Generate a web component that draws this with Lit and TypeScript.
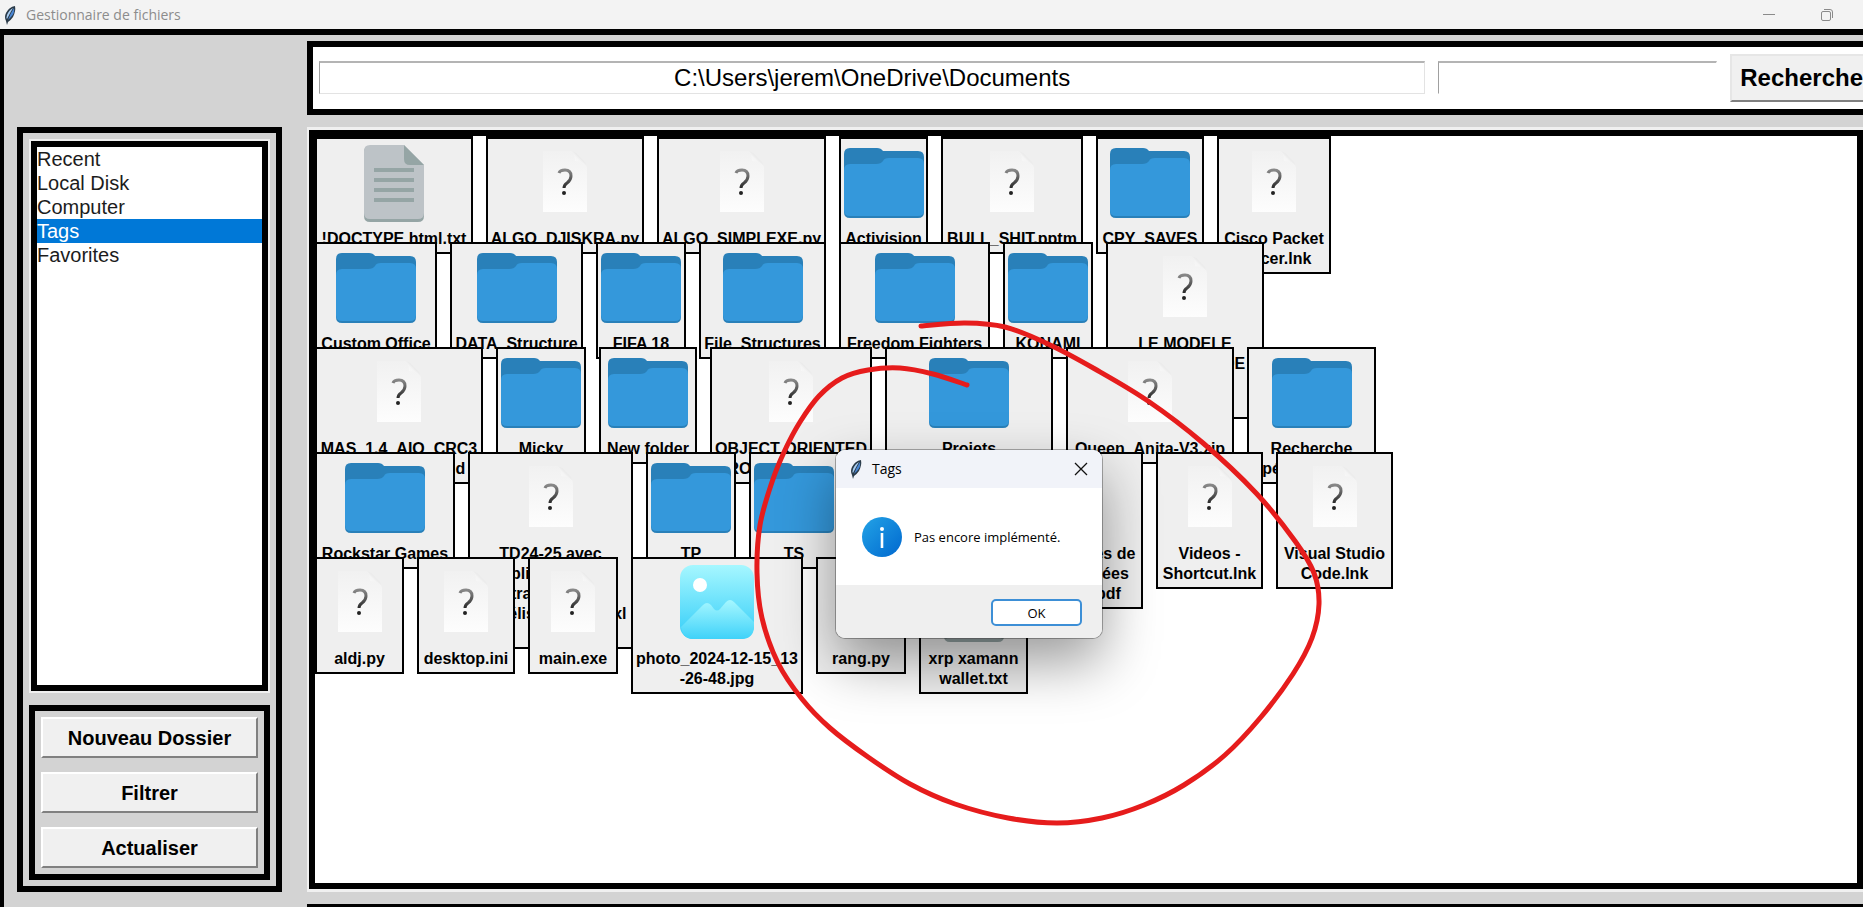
import { LitElement, html, css, svg } from "lit";
import { customElement, property, state } from "lit/decorators.js";
import { classMap } from "lit/directives/class-map.js";
import { styleMap } from "lit/directives/style-map.js";

type Kind = "folder" | "text" | "unknown" | "image";

interface Item {
  name: string;
  kind: Kind;
  width: number;
}

const item = (name: string, kind: Kind, width: number): Item => ({ name, kind, width });

// Each string holds the label already wrapped at the tile's wrap length.
const ROWS: Item[][] = [
  [
    item("!DOCTYPE html.txt", "text", 158),
    item("ALGO_DJISKRA.py", "unknown", 158),
    item("ALGO_SIMPLEXE.py", "unknown", 169),
    item("Activision", "folder", 89),
    item("BULL_SHIT.pptm", "unknown", 142),
    item("CPY_SAVES", "folder", 108),
    item("Cisco Packet\nTracer.lnk", "unknown", 114),
  ],
  [
    item("Custom Office\nTemplates", "folder", 122),
    item("DATA_Structure", "folder", 133),
    item("FIFA 18", "folder", 90),
    item("File_Structures", "folder", 127),
    item("Freedom Fighters", "folder", 151),
    item("KONAMI", "folder", 90),
    item("LE MODELE\nOPERATION DE\nDONNEES\n.pdf", "unknown", 158),
  ],
  [
    item("MAS_1.4_AIO_CRC3\n2_31F7FD1E.cmd", "unknown", 168),
    item("Micky", "folder", 90),
    item("New folder", "folder", 98),
    item("OBJECT ORIENTED\nPROGRAMMING.py", "unknown", 162),
    item("Projets", "folder", 168),
    item("Queen_Anita-V3.zip", "unknown", 168),
    item("Recherche\nopérationnelles", "folder", 129),
  ],
  [
    item("Rockstar Games", "folder", 140),
    item("TD24-25 avec\napplication des\ntransports\nmodélisation_v24.xl\nsx", "unknown", 165),
    item("TP", "folder", 90),
    item("TS", "folder", 90),
    item("TP bases", "folder", 134),
    item("Types dérivés de\nbases données\n_complet.pdf", "unknown", 144),
    item("Videos -\nShortcut.lnk", "unknown", 107),
    item("Visual Studio\nCode.lnk", "unknown", 117),
  ],
  [
    item("aldj.py", "unknown", 89),
    item("desktop.ini", "unknown", 98),
    item("main.exe", "unknown", 90),
    item("photo_2024-12-15_13\n-26-48.jpg", "image", 172),
    item("rang.py", "unknown", 90),
    item("xrp xamann\nwallet.txt", "text", 109),
  ],
];

const PLACES = ["Recent", "Local Disk", "Computer", "Tags", "Favorites"];
const ACTIONS = ["Nouveau Dossier", "Filtrer", "Actualiser"];

// Freehand stroke, as sampled points.
const STROKE: [number, number][] = [
  [921, 326], [965, 323], [1005, 327], [1048, 344], [1095, 369], [1148, 401], [1203, 443],
  [1256, 493], [1295, 541], [1314, 573], [1319, 604], [1312, 638], [1293, 674], [1261, 717],
  [1225, 755], [1184, 785], [1144, 805], [1102, 818], [1057, 823], [1008, 818], [955, 804], [910, 784],
  [868, 757], [830, 728], [802, 699], [778, 663], [762, 618], [757, 573], [760, 525], [772, 482],
  [785, 450], [800, 422], [819, 396], [842, 378], [868, 370], [900, 368], [933, 374], [967, 385],
];

// Catmull-Rom spline through the points, written as cubic Béziers.
function smooth(p: [number, number][]): string {
  let d = `M${p[0][0]} ${p[0][1]}`;
  for (let i = 0; i < p.length - 1; i++) {
    const a = p[Math.max(i - 1, 0)], b = p[i], c = p[i + 1], e = p[Math.min(i + 2, p.length - 1)];
    d += `C${b[0] + (c[0] - a[0]) / 6} ${b[1] + (c[1] - a[1]) / 6} ${c[0] - (e[0] - b[0]) / 6} ${c[1] - (e[1] - b[1]) / 6} ${c[0]} ${c[1]}`;
  }
  return d;
}

const GLYPHS: Record<Kind, unknown> = {
  folder: svg`
    <path d="M0 69V11Q0 5 6 5H33Q37 5 39 8H74Q80 8 80 14V69Q80 75 74 75H6Q0 75 0 69Z" fill="#2980b9"/>
    <path d="M0 69V27Q0 21 6 21H32Q37 21 39 18Q40 15 45 15H74Q80 15 80 21V67Q80 73 74 73H6Q0 73 0 67Z" fill="#3498db"/>`,
  text: svg`
    <path d="M10 9Q10 3 16 3H50L70 23V73Q70 79 64 79H16Q10 79 10 73Z" fill="#95a5a5"/>
    <path d="M10 8Q10 2 16 2H50L70 22V70Q70 76 64 76H16Q10 76 10 70Z" fill="#bdc3c7"/>
    <path d="M50 2L70 22H56Q50 22 50 16Z" fill="#95a5a5"/>
    <path d="M20 27H60M20 37H60M20 47H60M20 57H60" stroke="#95a5a5" stroke-width="4"/>`,
  unknown: svg`
    <defs>
      <linearGradient id="sheet" x1="0" y1="0" x2="0" y2="1">
        <stop offset="0" stop-color="#f1f1f1"/><stop offset="1" stop-color="#fdfdfd"/>
      </linearGradient>
      <linearGradient id="curl" x1="0" y1="1" x2="1" y2="0">
        <stop offset="0" stop-color="#fff"/><stop offset="0.5" stop-color="#f4f4f4"/><stop offset="1" stop-color="#c4c4c4"/>
      </linearGradient>
      <linearGradient id="mark" x1="0" y1="0" x2="0" y2="1">
        <stop offset="0" stop-color="#888"/><stop offset="1" stop-color="#2a2a2a"/>
      </linearGradient>
    </defs>
    <path d="M18 8H45Q50 8 53 12L59 18Q62 21 62 25V69H18Z" fill="url(#sheet)"/>
    <path d="M45 8Q50 9 50 18Q60 18 62 25Q62 21 59 18L53 12Q50 8 45 8Z" fill="url(#curl)"/>
    <path d="M34 30Q35 27 40 27Q46 27 46 33Q46 37 42 40Q39 42 39 45" fill="none" stroke="url(#mark)" stroke-width="3"/>
    <circle cx="39" cy="50" r="2" fill="#222"/>`,
  image: svg`
    <defs>
      <linearGradient id="sky" x1="0" y1="0" x2="0" y2="1">
        <stop offset="0" stop-color="#a6f7ff"/><stop offset="1" stop-color="#33cdf8"/>
      </linearGradient>
      <linearGradient id="hill" x1="0" y1="0" x2="0" y2="1">
        <stop offset="0" stop-color="#a6f7ff"/><stop offset="1" stop-color="#3fd2f9"/>
      </linearGradient>
    </defs>
    <rect x="3" y="2" width="74" height="74" rx="13" fill="url(#sky)"/>
    <path d="M4 64L26 42Q30 38 34 42L37 46Q40 49 43 46L49 39Q53 35 57 39L77 59V63Q77 76 64 76H16Q6 76 4 64Z" fill="url(#hill)"/>
    <circle cx="23" cy="22" r="7" fill="#fff"/>`,
};

const feather = html`<svg width="12" height="20" viewBox="0 0 12 20" aria-hidden="true">
  <path d="M11 1Q12 6 9 12Q7 15 4 17L3 20L2 16Q0 12 2 8Q5 2 11 1Z" fill="#2a3a48"/>
  <path d="M9 3Q5 5 3 10Q2 13 3 14Q6 8 9 3Z" fill="#a9cdf2"/>
  <path d="M10 3Q11 8 7 12L4 15Q6 9 10 3Z" fill="#4a86d4"/>
</svg>`;

@customElement("file-tile")
class FileTile extends LitElement {
  @property() label = "";
  @property() kind: Kind = "unknown";

  static styles = css`
    :host { display: block; flex: none; }
    .tile {
      display: flex; flex-direction: column; align-items: center; gap: 6px;
      box-sizing: border-box; width: 100%; margin: 0; padding: 4px 0 3px;
      border: 2px solid #000; border-radius: 0; background: #efefef; color: #000;
      font: bold 16px/20px "Liberation Sans", Arial, sans-serif;
    }
    .glyph { display: block; }
    .label { white-space: pre; text-align: center; }
  `;

  render() {
    return html`<button class="tile" type="button">
      <svg class="glyph" width="80" height="80" viewBox="0 0 80 80" aria-hidden="true">${GLYPHS[this.kind]}</svg>
      <span class="label">${this.label}</span>
    </button>`;
  }
}

@customElement("message-box")
class MessageBox extends LitElement {
  static styles = css`
    :host {
      display: flex; flex-direction: column; width: 266px; height: 188px; overflow: hidden;
      border-radius: 9px; background: #fff; color: #000;
      font-family: "Open Sans", "Noto Sans", sans-serif;
      box-shadow: 0 0 0 1px rgba(0, 0, 0, 0.3), 0 24px 56px rgba(0, 0, 0, 0.4);
    }
    .caption {
      display: flex; align-items: center; gap: 10px; height: 38px; padding: 0 14px;
      box-sizing: border-box; background: #f1f3f9; font-size: 14px; line-height: 20px;
    }
    .title { flex: 1; }
    .close { display: flex; margin: 0; padding: 0; border: 0; background: none; }
    .body { flex: 1; display: flex; align-items: center; gap: 12px; padding: 0 26px; font-size: 13px; }
    .footer { display: flex; justify-content: flex-end; padding: 14px 20px 12px; background: #efefef; }
    .ok {
      width: 91px; height: 27px; padding: 0; border: 2px solid #3d8fd6; border-radius: 5px;
      background: #fff; color: #000; font: 13px/20px "Open Sans", "Noto Sans", sans-serif;
    }
  `;

  render() {
    return html`
      <header class="caption">
        ${feather}
        <span class="title">Tags</span>
        <button class="close" type="button" aria-label="Fermer">
          <svg width="14" height="14" viewBox="0 0 14 14"><path d="M1 1L13 13M13 1L1 13" stroke="#111" stroke-width="1.3"/></svg>
        </button>
      </header>
      <div class="body">
        <svg width="40" height="40" viewBox="0 0 40 40" aria-hidden="true">
          <defs><linearGradient id="info" x1="0" y1="0" x2="1" y2="1">
            <stop offset="0" stop-color="#23a3e6"/><stop offset="1" stop-color="#0068cf"/>
          </linearGradient></defs>
          <circle cx="20" cy="20" r="20" fill="url(#info)"/>
          <circle cx="20" cy="12" r="2" fill="#fff"/>
          <path d="M20 16V31" stroke="#fff" stroke-width="2.6"/>
        </svg>
        <span>Pas encore implémenté.</span>
      </div>
      <footer class="footer"><button class="ok" type="button">OK</button></footer>
    `;
  }
}

@customElement("app-root")
class AppRoot extends LitElement {
  @state() private place = "Tags";

  static styles = css`
    :host {
      display: flex; flex-direction: column; position: relative; height: 100vh; overflow: hidden;
      background: #d3d3d3; color: #000; font-family: "Liberation Sans", Arial, sans-serif;
    }
    .titlebar {
      flex: none; display: flex; align-items: center; gap: 10px; height: 29px; padding: 0 30px 0 4px;
      box-sizing: border-box; background: #f3f3f3; color: #8c8c8c;
      font: 14px/20px "Open Sans", "Noto Sans", sans-serif;
    }
    .caption { flex: 1; }
    .window-btn { display: flex; margin-left: 36px; padding: 0; border: 0; background: none; }
    .frame {
      flex: 1; min-height: 0; display: grid; grid-template: 74px minmax(0, 1fr) 3px / 265px minmax(0, 1fr);
      gap: 12px 25px; padding: 6px 0 0 13px; border: solid #000; border-width: 6px 0 0 4px;
    }
    .toolbar {
      grid-area: 1 / 2; display: flex; align-items: center; gap: 13px; margin-right: -10px;
      padding: 0 0 1px 6px; border: solid #000; border-width: 6px 0 6px 6px; background: #fff;
    }
    .entry {
      box-sizing: border-box; height: 33px; margin: 0; padding: 0 4px; border: 1px solid #e3e3e3;
      border-top: 2px solid #b4b4b4; border-left-color: #a0a0a0; border-radius: 0; background: #fff;
      color: #000; font: 24px/28px "Liberation Sans", Arial, sans-serif;
    }
    .path { flex: 1; min-width: 0; text-align: center; }
    .query { width: 279px; border-right-color: #fff; border-bottom-color: #fff; }
    .raised {
      display: block; box-sizing: border-box; margin: 0; padding: 0 8px; border: 2px solid #808080;
      border-top-color: #fff; border-left-color: #fff; border-radius: 0; background: #f0f0f0; color: #000;
      font: bold 20px/24px "Liberation Sans", Arial, sans-serif;
    }
    .search { height: 48px; font-size: 24px; border-top-color: #e6e6e6; border-left-color: #e6e6e6; }
    .sidebar {
      grid-area: 2 / 1; display: flex; flex-direction: column; gap: 12px; padding: 6px; border: 6px solid #000;
    }
    .places {
      flex: 1; margin: 2px; padding: 0; list-style: none; border: 6px solid #000; background: #fff;
      outline: 2px solid #f0f0f0;
    }
    .place {
      display: block; width: 100%; margin: 0; padding: 0; border: 0; background: none; color: #1c1c1c;
      text-align: left; font: 20px/24px "Liberation Sans", Arial, sans-serif;
    }
    .place.selected { background: #0078d7; color: #fff; }
    .actions { display: flex; flex-direction: column; gap: 14px; padding: 6px; border: 6px solid #000; }
    .actions .raised { height: 41px; }
    .view { grid-area: 2 / 2; display: flex; margin-right: -3px; padding: 3px 3px 3px 2px; background: #f0f0f0; }
    .canvas {
      flex: 1; min-width: 0; display: flex; flex-direction: column; padding-top: 1px;
      border: 6px solid #000; background: #fff;
    }
    .row { flex: none; display: flex; align-items: flex-start; gap: 13px; height: 105px; }
    .row:first-child file-tile { box-shadow: 0 -1px 0 #000; }
    .status { grid-area: 3 / 2; background: #000; }
    .dialog { position: absolute; left: 836px; top: 450px; }
    .stroke { position: absolute; left: 0; top: 0; pointer-events: none; }
  `;

  render() {
    return html`
      <header class="titlebar">
        ${feather}
        <span class="caption">Gestionnaire de fichiers</span>
        <button class="window-btn" type="button" aria-label="Réduire">
          <svg width="12" height="12" viewBox="0 0 12 12"><path d="M0 5.5H12" stroke="#8a8a8a"/></svg>
        </button>
        <button class="window-btn" type="button" aria-label="Restaurer">
          <svg width="12" height="12" viewBox="0 0 12 12" fill="none" stroke="#8a8a8a">
            <rect x="0.5" y="2.5" width="9" height="9" rx="1.5"/>
            <path d="M3 0.5H9Q11.500 0.5 11.500 3V9"/>
          </svg>
        </button>
      </header>
      <main class="frame">
        <div class="toolbar">
          <input class="entry path" type="text" aria-label="Chemin" .value=${"C:\\Users\\jerem\\OneDrive\\Documents"}>
          <input class="entry query" type="text" aria-label="Recherche">
          <button class="raised search" type="button">Recherche</button>
        </div>
        <aside class="sidebar">
          <ul class="places">
            ${PLACES.map((name) => html`<li>
              <button type="button" class=${classMap({ place: true, selected: name === this.place })}
                @click=${() => (this.place = name)}>${name}</button>
            </li>`)}
          </ul>
          <div class="actions">
            ${ACTIONS.map((name) => html`<button class="raised" type="button">${name}</button>`)}
          </div>
        </aside>
        <section class="view">
          <div class="canvas">
            ${ROWS.map((row) => html`<div class="row">
              ${row.map((it) => html`<file-tile .label=${it.name} .kind=${it.kind}
                style=${styleMap({ width: `${it.width}px` })}></file-tile>`)}
            </div>`)}
          </div>
        </section>
        <div class="status"></div>
      </main>
      <message-box class="dialog" role="dialog" aria-label="Tags"></message-box>
      <svg class="stroke" width="1340" height="840" viewBox="0 0 1340 840" aria-hidden="true">
        <path d=${smooth(STROKE)} fill="none" stroke="#e61c1c" stroke-width="5" stroke-linecap="round"/>
      </svg>
    `;
  }
}
